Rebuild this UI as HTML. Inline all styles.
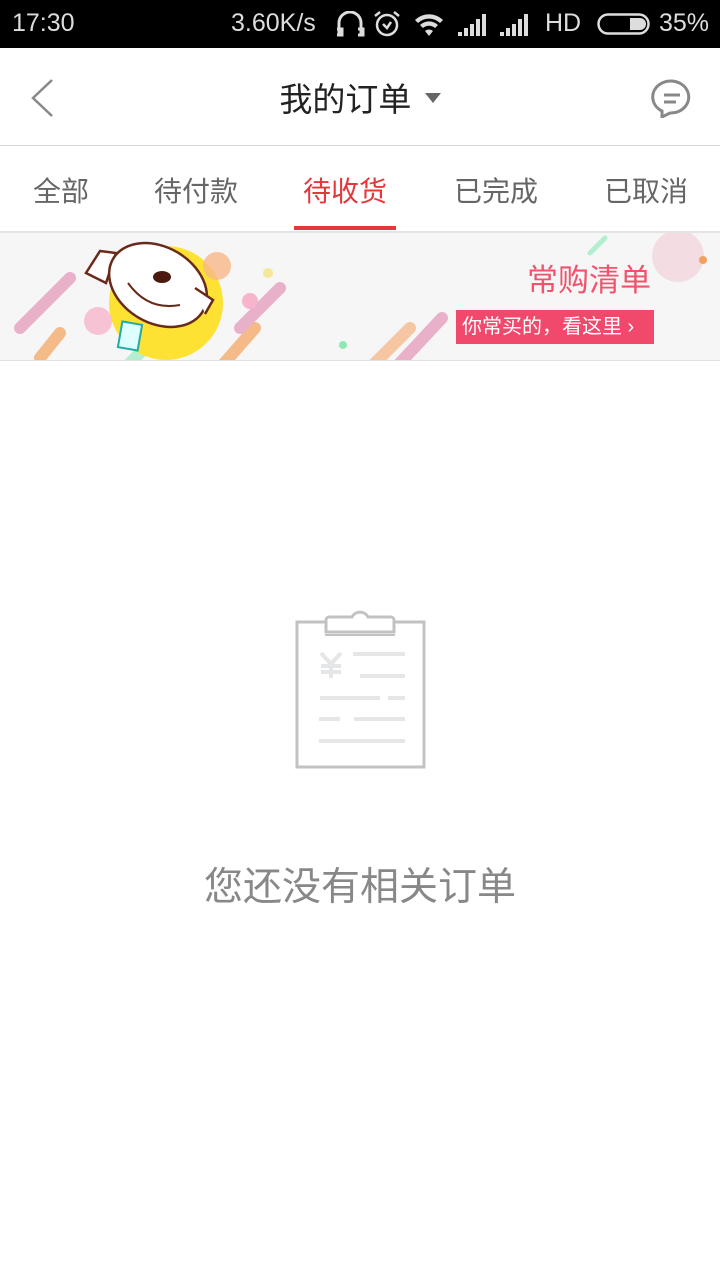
<!DOCTYPE html>
<html><head><meta charset="utf-8"><style>
*{margin:0;padding:0;box-sizing:border-box}
body{width:720px;height:1280px;background:#fff;font-family:"Liberation Sans","Noto Sans CJK SC",sans-serif;position:relative;overflow:hidden}
.sb{height:48px;background:#000;color:#ddd;font-size:25px;position:relative}
.sb span{position:absolute;top:9px}
.nav{height:98px;border-bottom:1px solid #d8d8d8;position:relative}
.title{position:absolute;left:0;right:0;text-align:center;font-size:33px;color:#222;top:25px}
.tabs{height:85px;position:relative;font-size:28px;color:#666}
.tabs span{position:absolute;top:24px}
.banner{position:absolute;top:231px;left:0;width:720px;height:130px;background:#f6f6f6;border-top:2px solid #e4e4e4;border-bottom:1px solid #e2e2e2;overflow:hidden}
</style></head><body>
<div class="sb">
<span style="left:12px">17:30</span>
<span style="left:231px">3.60K/s</span>
<svg style="position:absolute;left:335px;top:11px" width="30" height="26" viewBox="0 0 30 26" fill="none" stroke="#ddd" stroke-width="3"><path d="M4 24V12a11 11 0 0 1 22 0v12M2 18h5v6H2M23 18h5v6h-5"/></svg>
<svg style="position:absolute;left:372px;top:10px" width="30" height="28" viewBox="0 0 30 28" fill="none" stroke="#ddd" stroke-width="2.5"><circle cx="15" cy="15" r="10"/><path d="M11 14l4 4 4-6M3 6l5-4M27 6l-5-4"/></svg>
<svg style="position:absolute;left:413px;top:12px" width="32" height="24" viewBox="0 0 32 24" fill="#ddd"><path d="M16 24l-4-5a6 6 0 0 1 8 0z"/><path d="M2 8a20 20 0 0 1 28 0l-3 3a16 16 0 0 0-22 0zM7 13a13 13 0 0 1 18 0l-3 3a9 9 0 0 0-12 0z"/></svg>
<svg style="position:absolute;left:458px;top:14px" width="32" height="22" viewBox="0 0 32 22" fill="#ddd"><rect x="0" y="18" width="4" height="4"/><rect x="6" y="14" width="4" height="8"/><rect x="12" y="10" width="4" height="12"/><rect x="18" y="5" width="4" height="17"/><rect x="24" y="0" width="4" height="22"/></svg>
<svg style="position:absolute;left:500px;top:14px" width="32" height="22" viewBox="0 0 32 22" fill="#ddd"><rect x="0" y="18" width="4" height="4"/><rect x="6" y="14" width="4" height="8"/><rect x="12" y="10" width="4" height="12"/><rect x="18" y="5" width="4" height="17"/><rect x="24" y="0" width="4" height="22"/></svg>
<span style="left:545px">HD</span>
<svg style="position:absolute;left:597px;top:13px" width="56" height="22" viewBox="0 0 56 22"><rect x="1.5" y="1.5" width="50" height="19" rx="9.5" fill="none" stroke="#ddd" stroke-width="2.5"/><path d="M33 5h10a6 6 0 0 1 0 12H33z" fill="#ddd"/></svg>
<span style="left:659px">35%</span>
</div>
<div class="nav">
<svg style="position:absolute;left:28px;top:30px" width="30" height="40" viewBox="0 0 30 40" fill="none" stroke="#888" stroke-width="2.5"><path d="M24 2L5 20l19 18"/></svg>
<div class="title">我的订单 <span style="display:inline-block;width:0;height:0;border-left:8px solid transparent;border-right:8px solid transparent;border-top:10px solid #666;vertical-align:middle;margin-left:4px;position:relative;top:-4px"></span></div>
<svg style="position:absolute;left:650px;top:30px" width="44" height="40" viewBox="0 0 44 40" fill="none" stroke="#888" stroke-width="3"><path d="M12 33A18 16 0 1 1 20 35L12 39z"/><path d="M14 17h16M14 24h12"/></svg>
</div>
<div class="tabs">
<span style="left:33px">全部</span>
<span style="left:154px">待付款</span>
<span style="left:303px;color:#e4393c">待收货</span>
<span style="left:454px">已完成</span>
<span style="left:604px">已取消</span>
<div style="position:absolute;left:294px;top:80px;width:102px;height:4px;background:#e4393c"></div>
</div>
<div class="banner">
<svg width="720" height="130" style="position:absolute;left:0;top:0">
<g stroke-linecap="round" stroke-width="12" opacity=".55">
<line x1="70" y1="45" x2="20" y2="95" stroke="#e07aa5"/>
<line x1="60" y1="100" x2="40" y2="125" stroke="#f38a30"/>
<line x1="200" y1="60" x2="120" y2="140" stroke="#7be9b0"/>
<line x1="205" y1="50" x2="150" y2="110" stroke="#e07aa5"/>
<line x1="255" y1="95" x2="220" y2="135" stroke="#f38a30"/>
<line x1="280" y1="55" x2="240" y2="95" stroke="#e07aa5"/>
<line x1="410" y1="95" x2="370" y2="135" stroke="#f6a060"/>
<line x1="442" y1="85" x2="400" y2="130" stroke="#e07aa5"/>
<line x1="605" y1="5" x2="590" y2="20" stroke="#7be9b0" stroke-width="5"/>
</g>
<circle cx="166" cy="70" r="57" fill="#fde233"/>
<circle cx="217" cy="33" r="14" fill="#f8b88a" opacity=".8"/>
<circle cx="268" cy="40" r="5" fill="#f5e79a"/>
<circle cx="98" cy="88" r="14" fill="#f7b5cc" opacity=".8"/>
<circle cx="250" cy="68" r="8" fill="#f7b5cc"/>
<circle cx="678" cy="23" r="26" fill="#f3dde3"/>
<circle cx="703" cy="27" r="4" fill="#f6a060"/>
<circle cx="343" cy="112" r="4" fill="#8ee8b3"/>
<path d="M100 18l-14 22 20 10 10-30z" fill="#fff" stroke="#6a2a1a" stroke-width="2.5"/>
<ellipse cx="158" cy="52" rx="52" ry="38" fill="#fff" stroke="#6a2a1a" stroke-width="2.5" transform="rotate(30 158 52)"/>
<path d="M195 55l18 12-8 14" fill="#fff" stroke="#6a2a1a" stroke-width="2.5"/>
<ellipse cx="162" cy="44" rx="9" ry="6" fill="#4a1a10"/>
<path d="M128 50q20 28 52 22" fill="none" stroke="#6a2a1a" stroke-width="2"/>
<rect x="120" y="90" width="20" height="26" fill="#dff" stroke="#2aa" stroke-width="2" transform="rotate(10 130 103)"/>
</svg>
<div style="position:absolute;left:527px;top:22px;font-size:31px;color:#f0536c">常购清单</div>
<div style="position:absolute;left:456px;top:77px;width:198px;height:34px;background:#f0496c;color:#fff;font-size:20px;line-height:34px;padding-left:6px;white-space:nowrap">你常买的，看这里 ›</div>
</div>
<svg style="position:absolute;left:280px;top:595px" width="160" height="180" viewBox="280 595 160 180">
<rect x="297" y="622" width="127" height="145" fill="none" stroke="#c2c2c2" stroke-width="3"/>
<path d="M326 632v-12a3 3 0 0 1 3-3h23a9 9 0 0 1 16 0h23a3 3 0 0 1 3 3v12z" fill="#fff" stroke="#c2c2c2" stroke-width="3"/>
<line x1="325" y1="635" x2="395" y2="635" stroke="#c2c2c2" stroke-width="2"/>
<g stroke="#e4e6e8" stroke-width="4">
<line x1="353" y1="654" x2="405" y2="654"/><line x1="360" y1="676" x2="405" y2="676"/>
<line x1="320" y1="698" x2="380" y2="698"/><line x1="388" y1="698" x2="405" y2="698"/>
<line x1="319" y1="719" x2="340" y2="719"/><line x1="354" y1="719" x2="405" y2="719"/>
<line x1="319" y1="741" x2="405" y2="741"/>
<path d="M321 653l10 11 10-11M331 664v14M321 666h20M321 672h20" fill="none"/>
</g>
</svg>
<div style="position:absolute;left:0;right:0;top:856px;text-align:center;font-size:39px;color:#888">您还没有相关订单</div>
</body></html>
